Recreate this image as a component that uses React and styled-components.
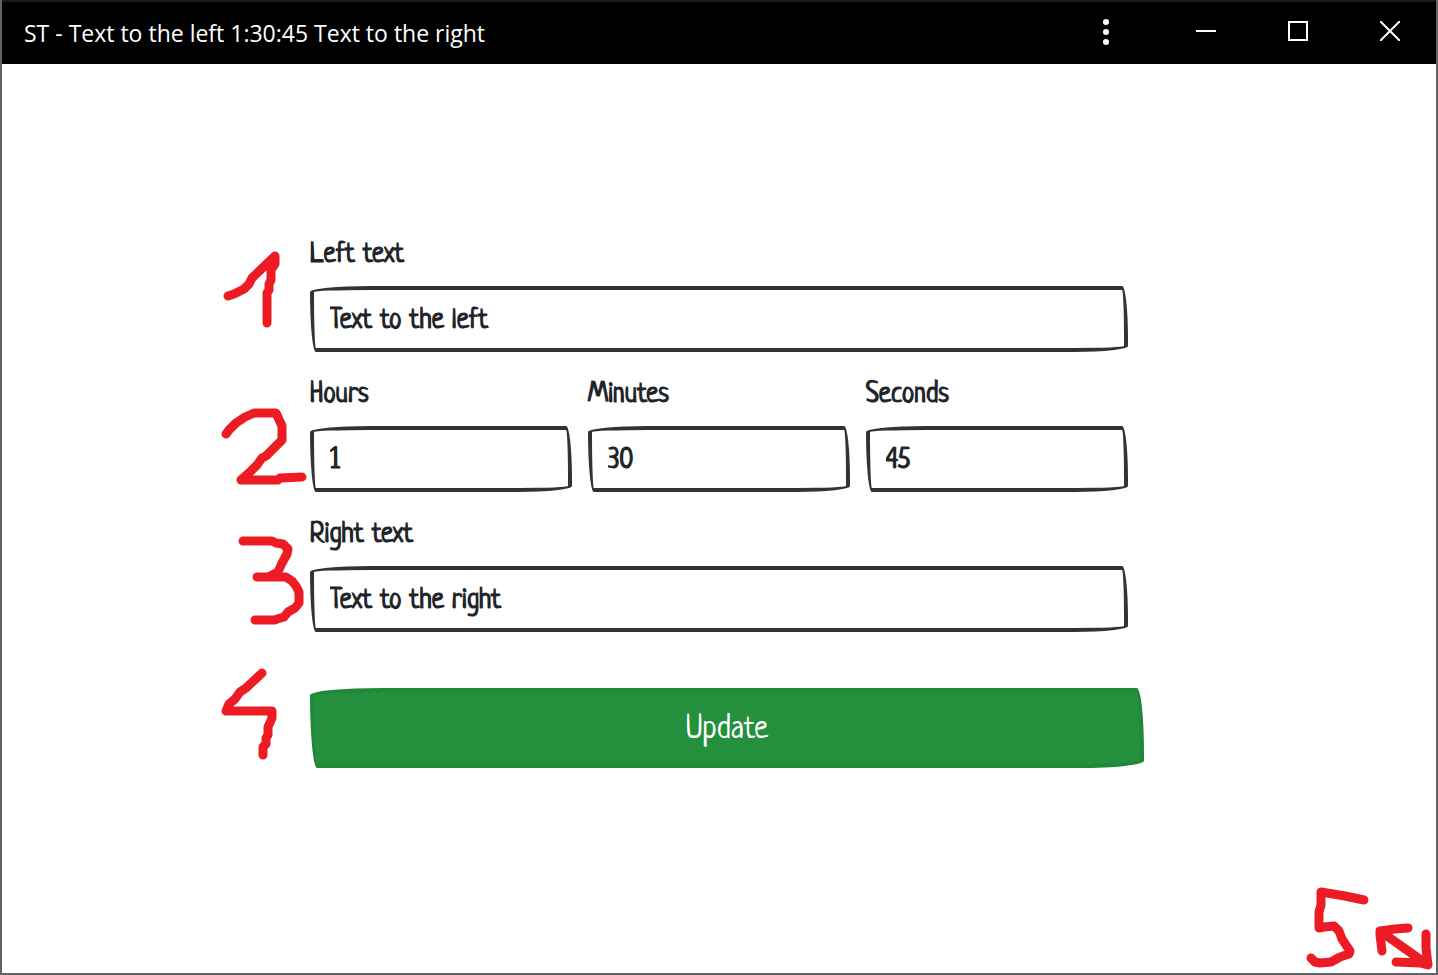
import React from "react";
import styled, { createGlobalStyle } from "styled-components";

const GlobalStyle = createGlobalStyle`
  *, *::before, *::after { box-sizing: border-box; }
  body { margin: 0; background: #fff; }
`;

const sketchRadius = "510px 50px 450px 50px / 50px 450px 50px 510px";
const handFont = `Neucha, Lato, sans-serif`;

const Window = styled.div`
  position: relative;
  display: flex;
  flex-direction: column;
  min-height: 100vh;
  border: 2px solid #626366;
  border-top: 0;
  background: #fff;
`;

const TitleBar = styled.header`
  display: flex;
  justify-content: space-between;
  height: 64px;
  border-top: 2px solid #1b1b1b;
  background: #000;
  color: #fff;
`;

const Title = styled.h1`
  margin: 0;
  padding-left: 22px;
  font: 400 23px/62px "Open Sans", "Noto Sans", sans-serif;
  white-space: nowrap;
`;

const Controls = styled.div`
  display: flex;
`;

const ControlButton = styled.button`
  display: flex;
  align-items: center;
  justify-content: center;
  width: ${(p) => (p.$wide ? "108px" : "92px")};
  height: 58px;
  padding: 0;
  border: 0;
  background: transparent;
  color: #fff;
`;

const Main = styled.main`
  display: flex;
  flex: 1;
  justify-content: center;
  padding: 168px 16px 64px;
`;

const Form = styled.form`
  position: relative;
  width: 100%;
  max-width: 818px;
  font-family: ${handFont};
`;

const Row = styled.div`
  display: flex;
  gap: 16px;
  margin-bottom: 20px;
`;

const FieldBox = styled.div`
  flex: 1;
  min-width: 0;
`;

const Label = styled.label`
  display: block;
  padding-top: 2px;
  margin-bottom: 10px;
  font-size: 28px;
  font-weight: 700;
  line-height: 42px;
  color: #212529;
`;

const Input = styled.input`
  display: block;
  width: 100%;
  height: 66px;
  padding: 4px 16px 0;
  border: 4px solid #333;
  border-radius: ${sketchRadius};
  background: #fff;
  color: #212529;
  font-family: inherit;
  font-size: 28px;
  font-weight: 700;
  outline: 0;
`;

const UpdateButton = styled.button`
  display: block;
  width: calc(100% + 16px);
  height: 80px;
  margin-top: 56px;
  padding: 4px 16px 0;
  border: 4px solid #21883a;
  border-radius: ${sketchRadius};
  background: #248f3c;
  color: #fff;
  font-family: inherit;
  font-size: 32px;
`;

const Marks = styled.svg`
  position: absolute;
  overflow: visible;
  pointer-events: none;
  fill: none;
  stroke: #ed1c24;
  stroke-width: 9px;
  stroke-linecap: round;
  stroke-linejoin: round;
`;

const StepMarks = styled(Marks)`
  top: 0;
  right: 100%;
`;

const CornerMarks = styled(Marks)`
  right: 0;
  bottom: 0;
`;

function Field({ id, label, value }) {
  return (
    <FieldBox>
      <Label htmlFor={id}>{label}</Label>
      <Input id={id} type="text" defaultValue={value} />
    </FieldBox>
  );
}

export default function App() {
  return (
    <>
      <GlobalStyle />
      <Window>
        <TitleBar>
          <Title>ST - Text to the left 1:30:45 Text to the right</Title>
          <Controls>
            <ControlButton $wide type="button" aria-label="More options">
              <svg width="8" height="28" fill="currentColor">
                <circle cx="4" cy="5" r="3" />
                <circle cx="4" cy="15" r="3" />
                <circle cx="4" cy="25" r="3" />
              </svg>
            </ControlButton>
            <ControlButton type="button" aria-label="Minimize">
              <svg width="20" height="20" stroke="currentColor" strokeWidth="2">
                <path d="M0 10H20" />
              </svg>
            </ControlButton>
            <ControlButton type="button" aria-label="Maximize">
              <svg width="20" height="20" fill="none" stroke="currentColor" strokeWidth="2">
                <path d="M1 1H19V19H1Z" />
              </svg>
            </ControlButton>
            <ControlButton type="button" aria-label="Close">
              <svg width="20" height="20" stroke="currentColor" strokeWidth="2">
                <path d="M0 0L20 20M20 0L0 20" />
              </svg>
            </ControlButton>
          </Controls>
        </TitleBar>
        <Main>
          <Form onSubmit={(e) => e.preventDefault()}>
            <Row>
              <Field id="left" label="Left text" value="Text to the left" />
            </Row>
            <Row>
              <Field id="hours" label="Hours" value="1" />
              <Field id="minutes" label="Minutes" value="30" />
              <Field id="seconds" label="Seconds" value="45" />
            </Row>
            <Row>
              <Field id="right" label="Right text" value="Text to the right" />
            </Row>
            <UpdateButton type="submit">Update</UpdateButton>
            <StepMarks width="90" height="540" viewBox="220 232 90 540" aria-hidden="true">
              <path d="M228 296L234 294L244 289L249 284L252 278L275 256V264L271 270L271 280L269 284V290L267 293V323" />
              <path d="M226 434L229 430L236 423L245 417L254 413H276L282 426V440L266 456L262 458L257 465L249 473L241 480H278L280 478L302 477" />
              <path d="M243 541H272L276 543L283 544L288 549L287 554L282 563L278 572L270 576M257 577H286L292 581L296 586L299 592V603L295 608L288 612L284 617L277 619L275 620H255" />
              <path d="M262 673L246 688L240 692L235 699L229 704L226 711H272V718L268 727V735L266 738V744L263 747V755" />
            </StepMarks>
          </Form>
        </Main>
        <CornerMarks width="130" height="90" viewBox="1306 883 130 90" aria-hidden="true">
          <path d="M1364 900L1345 896L1321 892V905L1319 912V928L1324 927L1334 926L1339 931L1342 939L1350 951L1349 954L1340 957L1331 962L1320 963L1315 962L1311 958" />
          <path d="M1408 928L1395 929L1380 931V935L1382 951M1380 931L1404 948L1428 965M1426 934V948L1428 965L1420 963L1396 962" />
        </CornerMarks>
      </Window>
    </>
  );
}
